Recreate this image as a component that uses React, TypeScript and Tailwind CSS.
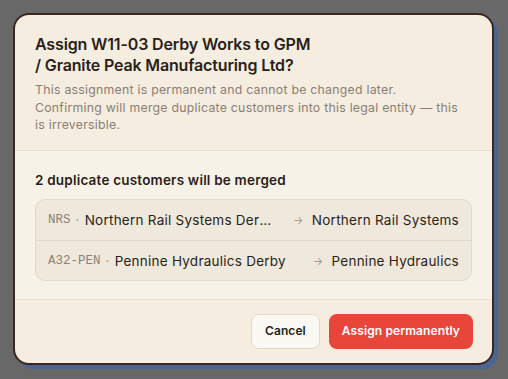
import React from 'react';

const MERGES = [
  { code: 'NRS', from: 'Northern Rail Systems Derby', to: 'Northern Rail Systems' },
  { code: 'A32-PEN', from: 'Pennine Hydraulics Derby', to: 'Pennine Hydraulics' },
];

export default function App() {
  return (
    <div
      className="flex h-[379px] w-[508px] items-start bg-[#686868] pl-[13px] pt-[13px]"
      style={{ fontFamily: 'Inter, "Noto Sans", sans-serif' }}
    >
      <div className="w-[481px] overflow-hidden rounded-[16px] border-2 border-[#3b2722] bg-[#f5ede0] shadow-[4px_4px_0_#4a6494]">
        <div className="px-5 pb-[16px] pt-[19px]">
          <h2 className="text-[16px] font-semibold leading-[21px] tracking-[-0.15px] text-[#2a1e19]">
            Assign W11-03 Derby Works to GPM
            <br />/ Granite Peak Manufacturing Ltd?
          </h2>
          <p className="mt-[5px] text-[12.3px] leading-[17.5px] tracking-[0.25px] text-[#8a7e75]">
            This assignment is permanent and cannot be changed later.
            <br />
            Confirming will merge duplicate customers into this legal entity — this
            <br />
            is irreversible.
          </p>
        </div>

        <div className="border-y border-[#e9dfd0] bg-[#f6f2e8] px-5 pb-[18px] pt-[20px]">
          <p className="text-[13.5px] font-semibold leading-[18px] tracking-[0.2px] text-[#2a1e19]">
            2 duplicate customers will be merged
          </p>
          <div className="mt-[10px] overflow-hidden rounded-[10px] border border-[#e2d9ca] bg-[#efe8dc]">
            {MERGES.map((m, i) => (
              <div
                key={m.code}
                className={`flex h-[40px] items-center justify-between gap-5 px-3 pt-[2px] ${i > 0 ? 'border-t border-[#e2d9ca]' : ''}`}
              >
                <div className="flex min-w-0 items-center text-[13.5px] tracking-[0.25px] text-[#2a1e19]">
                  <span
                    className="shrink-0 text-[12.5px] tracking-normal text-[#8d8178]"
                    style={{ fontFamily: '"Liberation Mono", monospace' }}
                  >
                    {m.code}
                  </span>
                  <span className="mx-[5px] shrink-0 text-[#a79c92]">·</span>
                  <span className="truncate">{m.from}</span>
                </div>
                <div className="flex shrink-0 items-center gap-[8px] text-[13.5px] tracking-[0.25px] text-[#2a1e19]">
                  <span className="text-[11px] text-[#a59a90]">→</span>
                  <span>{m.to}</span>
                </div>
              </div>
            ))}
          </div>
        </div>

        <div className="flex justify-end gap-[9px] pb-[14px] pl-5 pr-[19px] pt-[14px]">
          <button
            type="button"
            className="h-[35px] rounded-[8px] border border-[#e2d9ca] bg-[#faf8f3] px-[13px] text-[12px] font-semibold tracking-[0.1px] text-[#2a1e19]"
          >
            Cancel
          </button>
          <button
            type="button"
            className="h-[35px] rounded-[8px] bg-[#e9463a] px-[13px] text-[12px] font-semibold tracking-[0.1px] text-white"
          >
            Assign permanently
          </button>
        </div>
      </div>
    </div>
  );
}
